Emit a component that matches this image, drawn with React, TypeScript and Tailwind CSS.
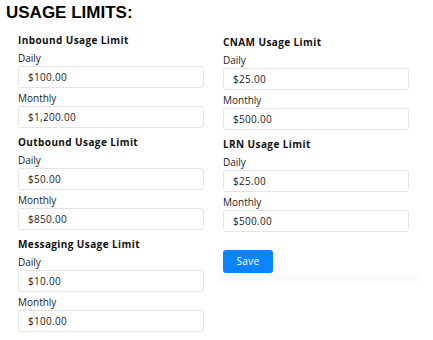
const limits = {
  left: [
    { title: "Inbound Usage Limit", daily: "$100.00", monthly: "$1,200.00" },
    { title: "Outbound Usage Limit", daily: "$50.00", monthly: "$850.00" },
    { title: "Messaging Usage Limit", daily: "$10.00", monthly: "$100.00" },
  ],
  right: [
    { title: "CNAM Usage Limit", daily: "$25.00", monthly: "$500.00" },
    { title: "LRN Usage Limit", daily: "$25.00", monthly: "$500.00" },
  ],
};

type Limit = { title: string; daily: string; monthly: string };

function Field({ label, value }: { label: string; value: string }) {
  return (
    <div className="mt-[2px]">
      <div className="text-[10px] leading-[16px] text-[#222]">{label}</div>
      <input
        defaultValue={value}
        className="block h-[22px] w-full rounded-[3px] border border-[#e4e4e4] bg-white pl-[9px] text-[10px] tracking-[0.3px] text-[#222] outline-none"
      />
    </div>
  );
}

function LimitGroup({ limit }: { limit: Limit }) {
  return (
    <div className="mb-[6px]">
      <div className="text-[10px] font-bold leading-[16px] tracking-[0.4px] text-[#111]">{limit.title}</div>
      <Field label="Daily" value={limit.daily} />
      <Field label="Monthly" value={limit.monthly} />
    </div>
  );
}

export default function App() {
  return (
    <div className="h-[340px] w-[433px] bg-white font-['Open_Sans',sans-serif]">
      <h1 className="pl-[6px] pt-[3px] font-['Liberation_Sans',Arial,sans-serif] text-[17px] font-bold leading-[20px] text-black">
        USAGE LIMITS:
      </h1>
      <div className="mt-[9px] grid grid-cols-[186px_186px] gap-x-[19px] pl-[18px]">
        <div>
          {limits.left.map((l) => (
            <LimitGroup key={l.title} limit={l} />
          ))}
        </div>
        <div className="pt-[2px]">
          {limits.right.map((l) => (
            <LimitGroup key={l.title} limit={l} />
          ))}
          <div className="-ml-[5px] mt-[15px] w-[201px] bg-[#fafafa]">
            <div className="bg-white pl-[5px]">
              <button className="h-[23px] w-[50px] rounded-[3px] bg-[#0a84ff] text-[10px] tracking-[0.3px] text-white">
                Save
              </button>
            </div>
            <div className="h-[9px]" />
          </div>
        </div>
      </div>
    </div>
  );
}
